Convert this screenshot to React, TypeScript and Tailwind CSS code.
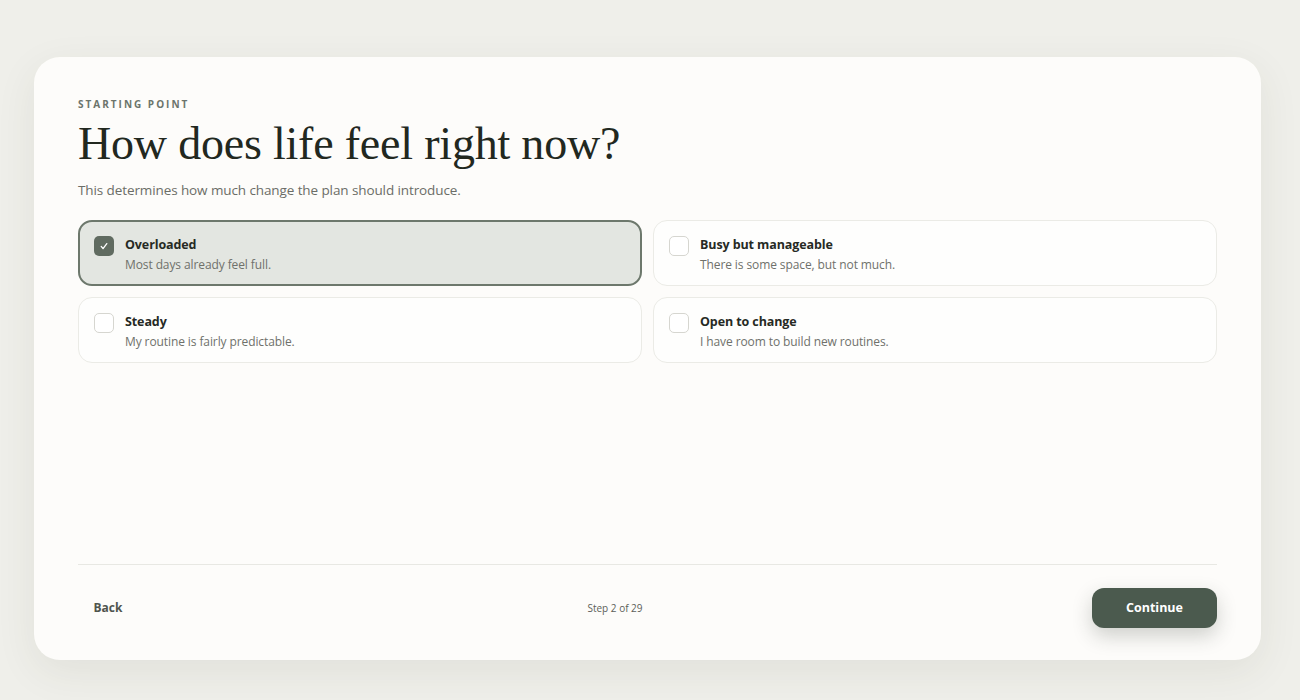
import React, { useState } from 'react';

type Option = {
  id: string;
  title: string;
  desc: string;
};

const OPTIONS: Option[] = [
  { id: 'overloaded', title: 'Overloaded', desc: 'Most days already feel full.' },
  { id: 'busy', title: 'Busy but manageable', desc: 'There is some space, but not much.' },
  { id: 'steady', title: 'Steady', desc: 'My routine is fairly predictable.' },
  { id: 'open', title: 'Open to change', desc: 'I have room to build new routines.' },
];

const CheckIcon = (props: React.SVGProps<SVGSVGElement>) => (
  <svg viewBox="0 0 20 20" fill="none" stroke="currentColor" strokeWidth="1.6" strokeLinecap="round" strokeLinejoin="round" {...props}>
    <path d="M6.5 10.5l2.3 2.8L13.5 7" />
  </svg>
);

const App = () => {
  const [selected, setSelected] = useState<string>('overloaded');

  return (
    <div className="min-h-screen bg-[#efefea] pl-[34px] pr-[39px] pt-[57px] pb-[40px] font-['Open_Sans','Noto_Sans',sans-serif]">
      {/* --- CARD --- */}
      <div className="bg-[#fdfcfa] rounded-[26px] shadow-[0_12px_40px_rgba(60,60,40,0.08)] h-[603px] px-[44px] pt-[40px] pb-[32px] flex flex-col">
        <div className="text-[10px] font-bold tracking-[0.2em] text-[#6b746b] leading-none mt-[2px]">STARTING POINT</div>
        <h1 className="mt-[9px] text-[46px] leading-[52px] text-[#22281f] font-['Liberation_Serif','Times_New_Roman',serif] tracking-[-0.2px]">
          How does life feel right now?
        </h1>
        <p className="mt-[10px] text-[13.5px] text-[#6b6d67] tracking-[-0.1px]">
          This determines how much change the plan should introduce.
        </p>

        {/* --- OPCIONES --- */}
        <div className="mt-[20px] grid grid-cols-2 gap-x-[11px] gap-y-[11px]">
          {OPTIONS.map((opt) => {
            const active = selected === opt.id;
            return (
              <button
                key={opt.id}
                onClick={() => setSelected(opt.id)}
                className={`text-left h-[66px] rounded-[14px] flex items-start gap-[11px] ${
                  active
                    ? 'bg-[#e3e6e1] border-2 border-[#6d786c] px-[14px] pt-[14px]'
                    : 'bg-[#fefefd] border border-[#ebebe6] px-[15px] pt-[15px]'
                }`}
              >
                <span
                  className={`w-[20px] h-[20px] rounded-[5px] flex items-center justify-center shrink-0 ${
                    active ? 'bg-[#606b60] text-white' : 'bg-white border border-[#d6d6d0]'
                  }`}
                >
                  {active && <CheckIcon className="w-[16px] h-[16px]" />}
                </span>
                <span className="flex flex-col">
                  <span className="text-[12.5px] font-bold text-[#262a24] leading-[18px] tracking-[-0.1px]">{opt.title}</span>
                  <span className="text-[12px] text-[#6f716b] leading-[18px] mt-[2px] tracking-[-0.1px]">{opt.desc}</span>
                </span>
              </button>
            );
          })}
        </div>

        <div className="flex-1" />

        {/* --- FOOTER --- */}
        <div className="border-t border-[#e8e8e3] pt-[23px] flex items-center justify-between">
          <button className="w-[60px] h-[40px] text-[12px] font-bold text-[#4f544d]">Back</button>
          <span className="text-[10px] text-[#5c5f59]">Step 2 of 29</span>
          <button className="w-[125px] h-[40px] rounded-[12px] bg-[#4b5a4e] text-white text-[12.5px] font-bold shadow-[0_8px_20px_rgba(40,50,40,0.22)]">
            Continue
          </button>
        </div>
      </div>
    </div>
  );
};

export default App;
